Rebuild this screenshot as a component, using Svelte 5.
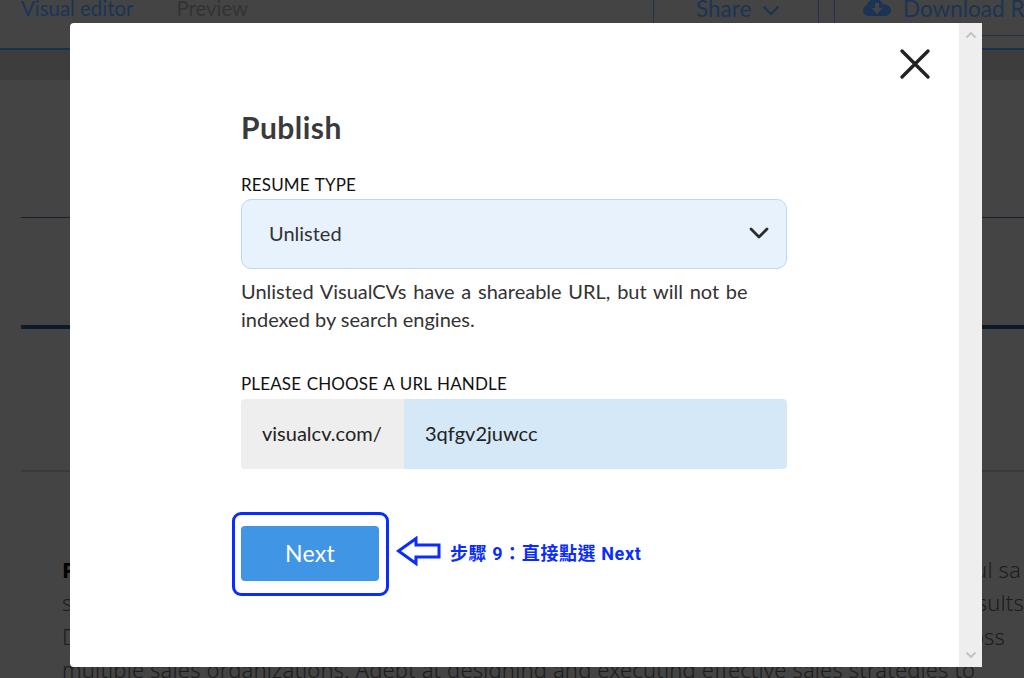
<script lang="ts">
  const lines = [
    { left: 'Professional', right: 'successful sa', bold: true, cls: 'first' },
    { left: 'sales leader with a record of', right: 'driving results', bold: false, cls: '' },
    { left: 'Demonstrated growth and revenue gains across', right: 'across', bold: false, cls: 'short' },
  ];
</script>

<div class="page">
  <header class="topbar">
    <nav class="tabs">
      <span class="tab active">Visual editor</span>
      <span class="tab">Preview</span>
    </nav>
    <div class="actions">
      <div class="share">
        Share
        <svg width="18" height="11" viewBox="0 0 18 11" fill="none" stroke="#1b3455" stroke-width="2.2">
          <path d="M1.500 1.500 9 9l7.500-7.500" />
        </svg>
      </div>
      <div class="download">
        <svg width="28" height="16" viewBox="0 0 28 16">
          <path fill="#1b3455" d="M6 16C2.500 16 0 13.500 0 10.500 0 8 1.600 6 4 5.300 4.800 2 7.800 -1 12-1c3.600 0 6.500 2 7.800 5C24.500 3.800 28 7 28 10.500 28 13.500 25.500 16 22 16Z" />
          <path fill="#444" d="M12 3h4v5h3.500L14 14 8.500 8H12Z" />
        </svg>
        <span>Download R</span>
      </div>
    </div>
  </header>
  <div class="band"></div>

  <div class="rule thin"></div>
  <div class="rule thick"></div>
  <div class="rule faint"></div>

  <div class="summary">
    {#each lines as line}
      <div class="line {line.cls}">
        {#if line.bold}<b>{line.left}</b>{:else}<span>{line.left}</span>{/if}
        <span>{line.right}</span>
      </div>
    {/each}
    <div class="line">multiple sales organizations. Adept at designing and executing effective sales strategies to</div>
  </div>
</div>

<div class="modal">
  <div class="body">
    <button class="close" aria-label="Close">
      <svg width="32" height="32" viewBox="0 0 32 32" fill="none" stroke="#222" stroke-width="3.4" stroke-linecap="round">
        <path d="M3 3l26 26M29 3 3 29" />
      </svg>
    </button>

    <h2>Publish</h2>

    <div class="label">RESUME TYPE</div>
    <div class="select">
      <span>Unlisted</span>
      <svg width="20" height="12" viewBox="0 0 20 12" fill="none" stroke="#2b2b2b" stroke-width="2.8" stroke-linecap="round" stroke-linejoin="round">
        <path d="M2 2l8 8 8-8" />
      </svg>
    </div>
    <p class="help">Unlisted VisualCVs have a shareable URL, but will not be indexed by search engines.</p>

    <div class="label second">PLEASE CHOOSE A URL HANDLE</div>
    <div class="handle">
      <span class="prefix">visualcv.com/</span>
      <span class="value">3qfgv2juwcc</span>
    </div>

    <div class="next-row">
      <div class="next-wrap">
        <button class="next">Next</button>
        <div class="highlight"></div>
      </div>
      <svg class="arrow" width="45" height="30" viewBox="0 0 45 30" fill="#fff" stroke="#0a2cff" stroke-width="3">
        <path d="M2.500 15 20 2.500V9h23v12H20v6.500Z" />
      </svg>
      <span class="note">步驟 9：直接點選 Next</span>
    </div>
  </div>

  <div class="scrollbar">
    <svg width="12" height="8" viewBox="0 0 12 8" fill="none" stroke="#c4c4c4" stroke-width="2"><path d="M1.500 6.500 6 2l4.500 4.500" /></svg>
    <svg width="12" height="8" viewBox="0 0 12 8" fill="none" stroke="#c4c4c4" stroke-width="2"><path d="M1.500 1.500 6 6l4.500-4.500" /></svg>
  </div>
</div>

<style>
  :global(body) {
    margin: 0;
    background: #444;
  }

  .page {
    position: relative;
    height: 678px;
    overflow: hidden;
    background: #444;
    font-family: "Noto Sans", sans-serif;
  }

  .topbar {
    display: flex;
    justify-content: space-between;
    height: 48px;
    border-bottom: 2px solid #17304f;
    overflow: hidden;
  }

  .tabs {
    display: flex;
    gap: 43px;
    padding-left: 21px;
    margin-top: -7px;
    font-family: Lato, sans-serif;
    font-size: 20.400px;
    line-height: 30px;
  }

  .tab {
    color: #333;
  }

  .tab.active {
    color: #1b3455;
  }

  .actions {
    display: flex;
    height: 36px;
    gap: 15px;
    font-family: Lato, sans-serif;
    font-size: 22.500px;
    line-height: 30px;
    color: #1b3455;
  }

  .share {
    display: flex;
    align-items: flex-start;
    gap: 11px;
    width: 166px;
    box-sizing: border-box;
    padding-left: 42px;
    margin-top: -6px;
    height: 42px;
    border-left: 1px solid #1b3455;
    border-right: 1px solid #1b3455;
  }

  .share svg {
    margin-top: 11px;
  }

  .download {
    display: flex;
    align-items: flex-start;
    gap: 12px;
    width: 190px;
    box-sizing: border-box;
    padding-left: 28px;
    margin-top: -6px;
    height: 42px;
    border-left: 1px solid #1b3455;
    border-bottom: 1px solid #1b3455;
    white-space: nowrap;
  }

  .download svg {
    margin-top: 6px;
    flex-shrink: 0;
  }

  .band {
    height: 30px;
    background: #3d3d3d;
  }

  .rule {
    margin-left: 21px;
  }

  .rule.thin {
    height: 1px;
    margin-top: 137px;
    background: #14202e;
  }

  .rule.thick {
    height: 4px;
    margin-top: 107px;
    background: #0c1a2a;
  }

  .rule.faint {
    height: 2px;
    margin-top: 141px;
    background: #3a3a3a;
  }

  .summary {
    margin-top: 81px;
    padding-left: 62px;
    font-size: 22px;
    letter-spacing: 0.160px;
    line-height: 33.400px;
    font-weight: 300;
    color: #1c1c1c;
  }

  .line {
    display: flex;
    justify-content: space-between;
    white-space: nowrap;
  }

  .line.first {
    padding-right: 3px;
  }

  .line.short {
    padding-right: 19px;
  }

  .line b {
    font-weight: 700;
    color: #000;
  }

  .modal {
    position: absolute;
    left: 70px;
    top: 23px;
    width: 912px;
    height: 644px;
    display: flex;
    background: #fff;
    border-radius: 4px 0 0 4px;
    overflow: hidden;
    font-family: Lato, "Noto Sans", sans-serif;
  }

  .body {
    position: relative;
    flex: 1;
    box-sizing: border-box;
    padding: 86px 172px 0 171px;
  }

  .close {
    position: absolute;
    top: 25px;
    right: 28px;
    padding: 0;
    border: 0;
    background: none;
    line-height: 0;
  }

  h2 {
    margin: 0 0 30px;
    font-size: 30px;
    letter-spacing: 0.450px;
    line-height: 36px;
    font-weight: 700;
    color: #3a3a3a;
  }

  .label {
    margin-bottom: 4px;
    font-size: 17px;
    letter-spacing: 0.150px;
    word-spacing: 1px;
    line-height: 20px;
    color: #111;
  }

  .label.second {
    margin-top: 41px;
    margin-bottom: 5px;
  }

  .select {
    display: flex;
    align-items: center;
    justify-content: space-between;
    box-sizing: border-box;
    height: 70px;
    padding: 0 17px 2px 27px;
    background: #e8f2fd;
    border: 1px solid #b9d8f5;
    border-radius: 10px;
    font-size: 20px;
    color: #333;
  }

  .help {
    margin: 8px 0 0;
    font-size: 20px;
    line-height: 28px;
    color: #333;
  }

  .help::first-line {
    word-spacing: 1.600px;
  }

  .handle {
    display: flex;
    height: 70px;
    border-radius: 4px;
    overflow: hidden;
    font-size: 20px;
    line-height: 68px;
    color: #222;
  }

  .prefix {
    width: 163px;
    box-sizing: border-box;
    padding-left: 21px;
    background: #eee;
  }

  .value {
    flex: 1;
    padding-left: 21px;
    background: #d5e8f8;
  }

  .next-row {
    display: flex;
    align-items: center;
    margin-top: 57px;
  }

  .next-wrap {
    position: relative;
    line-height: 0;
  }

  .next {
    width: 138px;
    height: 55px;
    padding: 0 0 2px;
    border: 0;
    border-radius: 4px;
    background: #4095e5;
    color: #fff;
    font-family: inherit;
    font-size: 23px;
    letter-spacing: 0.300px;
  }

  .highlight {
    position: absolute;
    inset: -14px -10px -15px -9px;
    border: 3px solid #0a2cff;
    border-radius: 9px;
  }

  .arrow {
    margin-left: 17px;
    margin-bottom: 5px;
  }

  .note {
    margin-left: 9px;
    margin-bottom: 3px;
    font-family: Roboto, "Noto Sans CJK TC", sans-serif;
    font-size: 18px;
    letter-spacing: 0.600px;
    font-weight: 700;
    color: #0a2cff;
    white-space: nowrap;
  }

  .scrollbar {
    display: flex;
    flex-direction: column;
    align-items: center;
    justify-content: space-between;
    width: 23px;
    padding: 8px 0;
    background: #eee;
  }
</style>
